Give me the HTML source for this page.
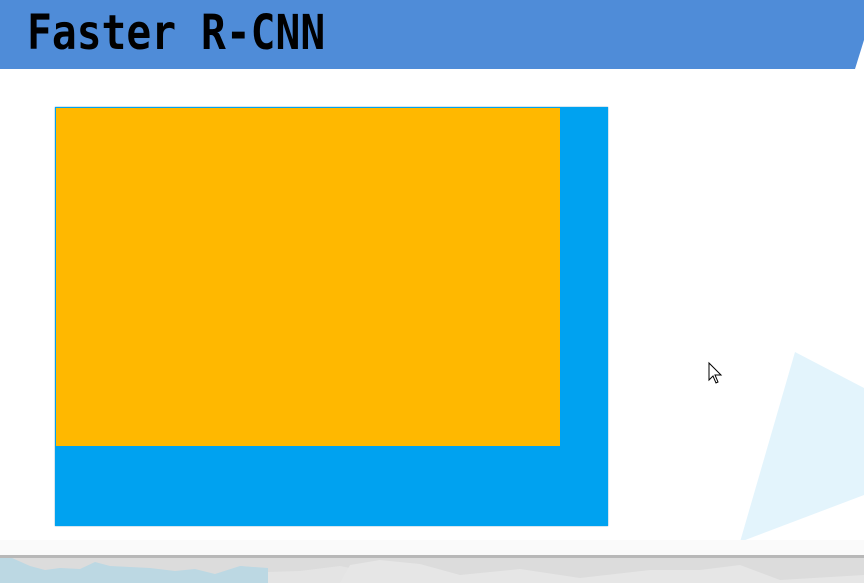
<!DOCTYPE html>
<html><head><style>
html,body{margin:0;padding:0;width:864px;height:583px;overflow:hidden;background:#fff;position:relative;font-family:"Liberation Sans",sans-serif}
.hdr{position:absolute;left:0;top:0;width:864px;height:69px}
.t{position:absolute;left:27px;top:5px;font-family:"DejaVu Sans Mono",monospace;font-weight:bold;font-size:48px;line-height:56px;color:#000;white-space:nowrap;transform:scaleX(0.86);transform-origin:top left}
.blue{position:absolute;left:55px;top:107px;width:553px;height:419px;background:#00A2F0;box-shadow:0 0 1px #2a7fb0}
.or{position:absolute;left:56px;top:108px;width:504px;height:338px;background:#FFB800}
</style></head><body>
<svg class="hdr" width="864" height="69"><polygon points="0,0 864,0 864,40 855,69 0,69" fill="#4F8CD8"/></svg>
<div class="t">Faster R-CNN</div>
<svg style="position:absolute;left:0;top:0" width="864" height="583">
<polygon points="795,352 864,388 864,495 740,542" fill="#E3F4FC"/>
<rect x="0" y="540" width="864" height="15" fill="#fafafa"/>
<rect x="0" y="555" width="864" height="28" fill="#dcdcdc"/>
<rect x="0" y="555" width="864" height="3" fill="#b8b8b8"/>
<path d="M0,558 L12,558 L30,566 L45,570 L60,568 L80,569 L95,562 L110,566 L130,567 L150,568 L175,571 L195,569 L215,574 L240,566 L260,568 L268,583 L0,583Z" fill="#BCD8E3"/>
<path d="M240,566 L268,568 L268,583 L240,583Z" fill="#BCD8E3"/>
<path d="M268,583 L268,572 L300,571 L340,566 L360,570 L400,565 L440,583Z" fill="#e4e4e4"/>
<path d="M340,583 L350,565 L380,560 L420,564 L460,575 L520,569 L580,578 L650,570 L700,570 L740,565 L780,580 L864,575 L864,583Z" fill="#e6e6e6"/>
<path d="M709,363 L709,380 L713,376 L716,383 L718,382 L715,375 L721,375Z" fill="#fff" stroke="#000" stroke-width="1"/>
</svg>
<div class="blue"></div>
<div class="or"></div>
</body></html>
